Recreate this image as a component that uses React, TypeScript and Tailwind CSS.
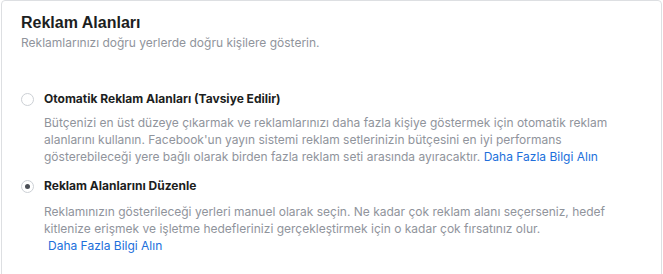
export default function App() {
  return (
    <div className="h-[274px] w-[663px] overflow-hidden bg-white pl-px pr-[1px]" style={{ fontFamily: 'Inter, "Liberation Sans", Arial, sans-serif' }}>
      <div className="h-[300px] rounded-t-[4px] border border-[#dddfe2] bg-white">
        <div className="px-[19px] pt-[12px]">
          <h2 className="text-[16px] font-bold leading-[20px] text-[#1c1e21]" style={{ fontFamily: '"Liberation Sans", Arial, sans-serif' }}>
            Reklam Alanları
          </h2>
          <p className="mt-[2px] text-[12px] leading-[16px] text-[#90949c]">Reklamlarınızı doğru yerlerde doğru kişilere gösterin.</p>
        </div>

        <div className="mt-[40px] pl-[19px] pr-[20px]">
          <div className="flex items-center gap-[10px]">
            <span className="h-[13px] w-[13px] rounded-full border border-[#ccd0d5] bg-white" />
            <span className="text-[12px] font-bold leading-[16px] text-[#1c1e21]">Otomatik Reklam Alanları (Tavsiye Edilir)</span>
          </div>
          <p className="mt-[7px] pl-[23px] text-[12px] leading-[17px] text-[#90949c]">
            Bütçenizi en üst düzeye çıkarmak ve reklamlarınızı daha fazla kişiye göstermek için otomatik reklam
            <br />
            alanlarını kullanın. Facebook'un yayın sistemi reklam setlerinizin bütçesini en iyi performans
            <br />
            gösterebileceği yere bağlı olarak birden fazla reklam seti arasında ayıracaktır.{" "}
            <a className="text-[#216fdb]">Daha Fazla Bilgi Alın</a>
          </p>

          <div className="mt-[13px] flex items-center gap-[10px]">
            <span className="flex h-[13px] w-[13px] items-center justify-center rounded-full border border-[#ccd0d5] bg-white">
              <span className="h-[5px] w-[5px] rounded-full bg-[#4b4f56]" />
            </span>
            <span className="text-[12px] font-bold leading-[16px] text-[#1c1e21]">Reklam Alanlarını Düzenle</span>
          </div>
          <p className="mt-[9px] pl-[23px] text-[12px] leading-[17px] text-[#90949c]">
            Reklamınızın gösterileceği yerleri manuel olarak seçin. Ne kadar çok reklam alanı seçerseniz, hedef
            <br />
            kitlenize erişmek ve işletme hedeflerinizi gerçekleştirmek için o kadar çok fırsatınız olur.
            <br />
            <a className="pl-[4px] text-[#216fdb]">Daha Fazla Bilgi Alın</a>
          </p>
        </div>
      </div>
    </div>
  );
}
